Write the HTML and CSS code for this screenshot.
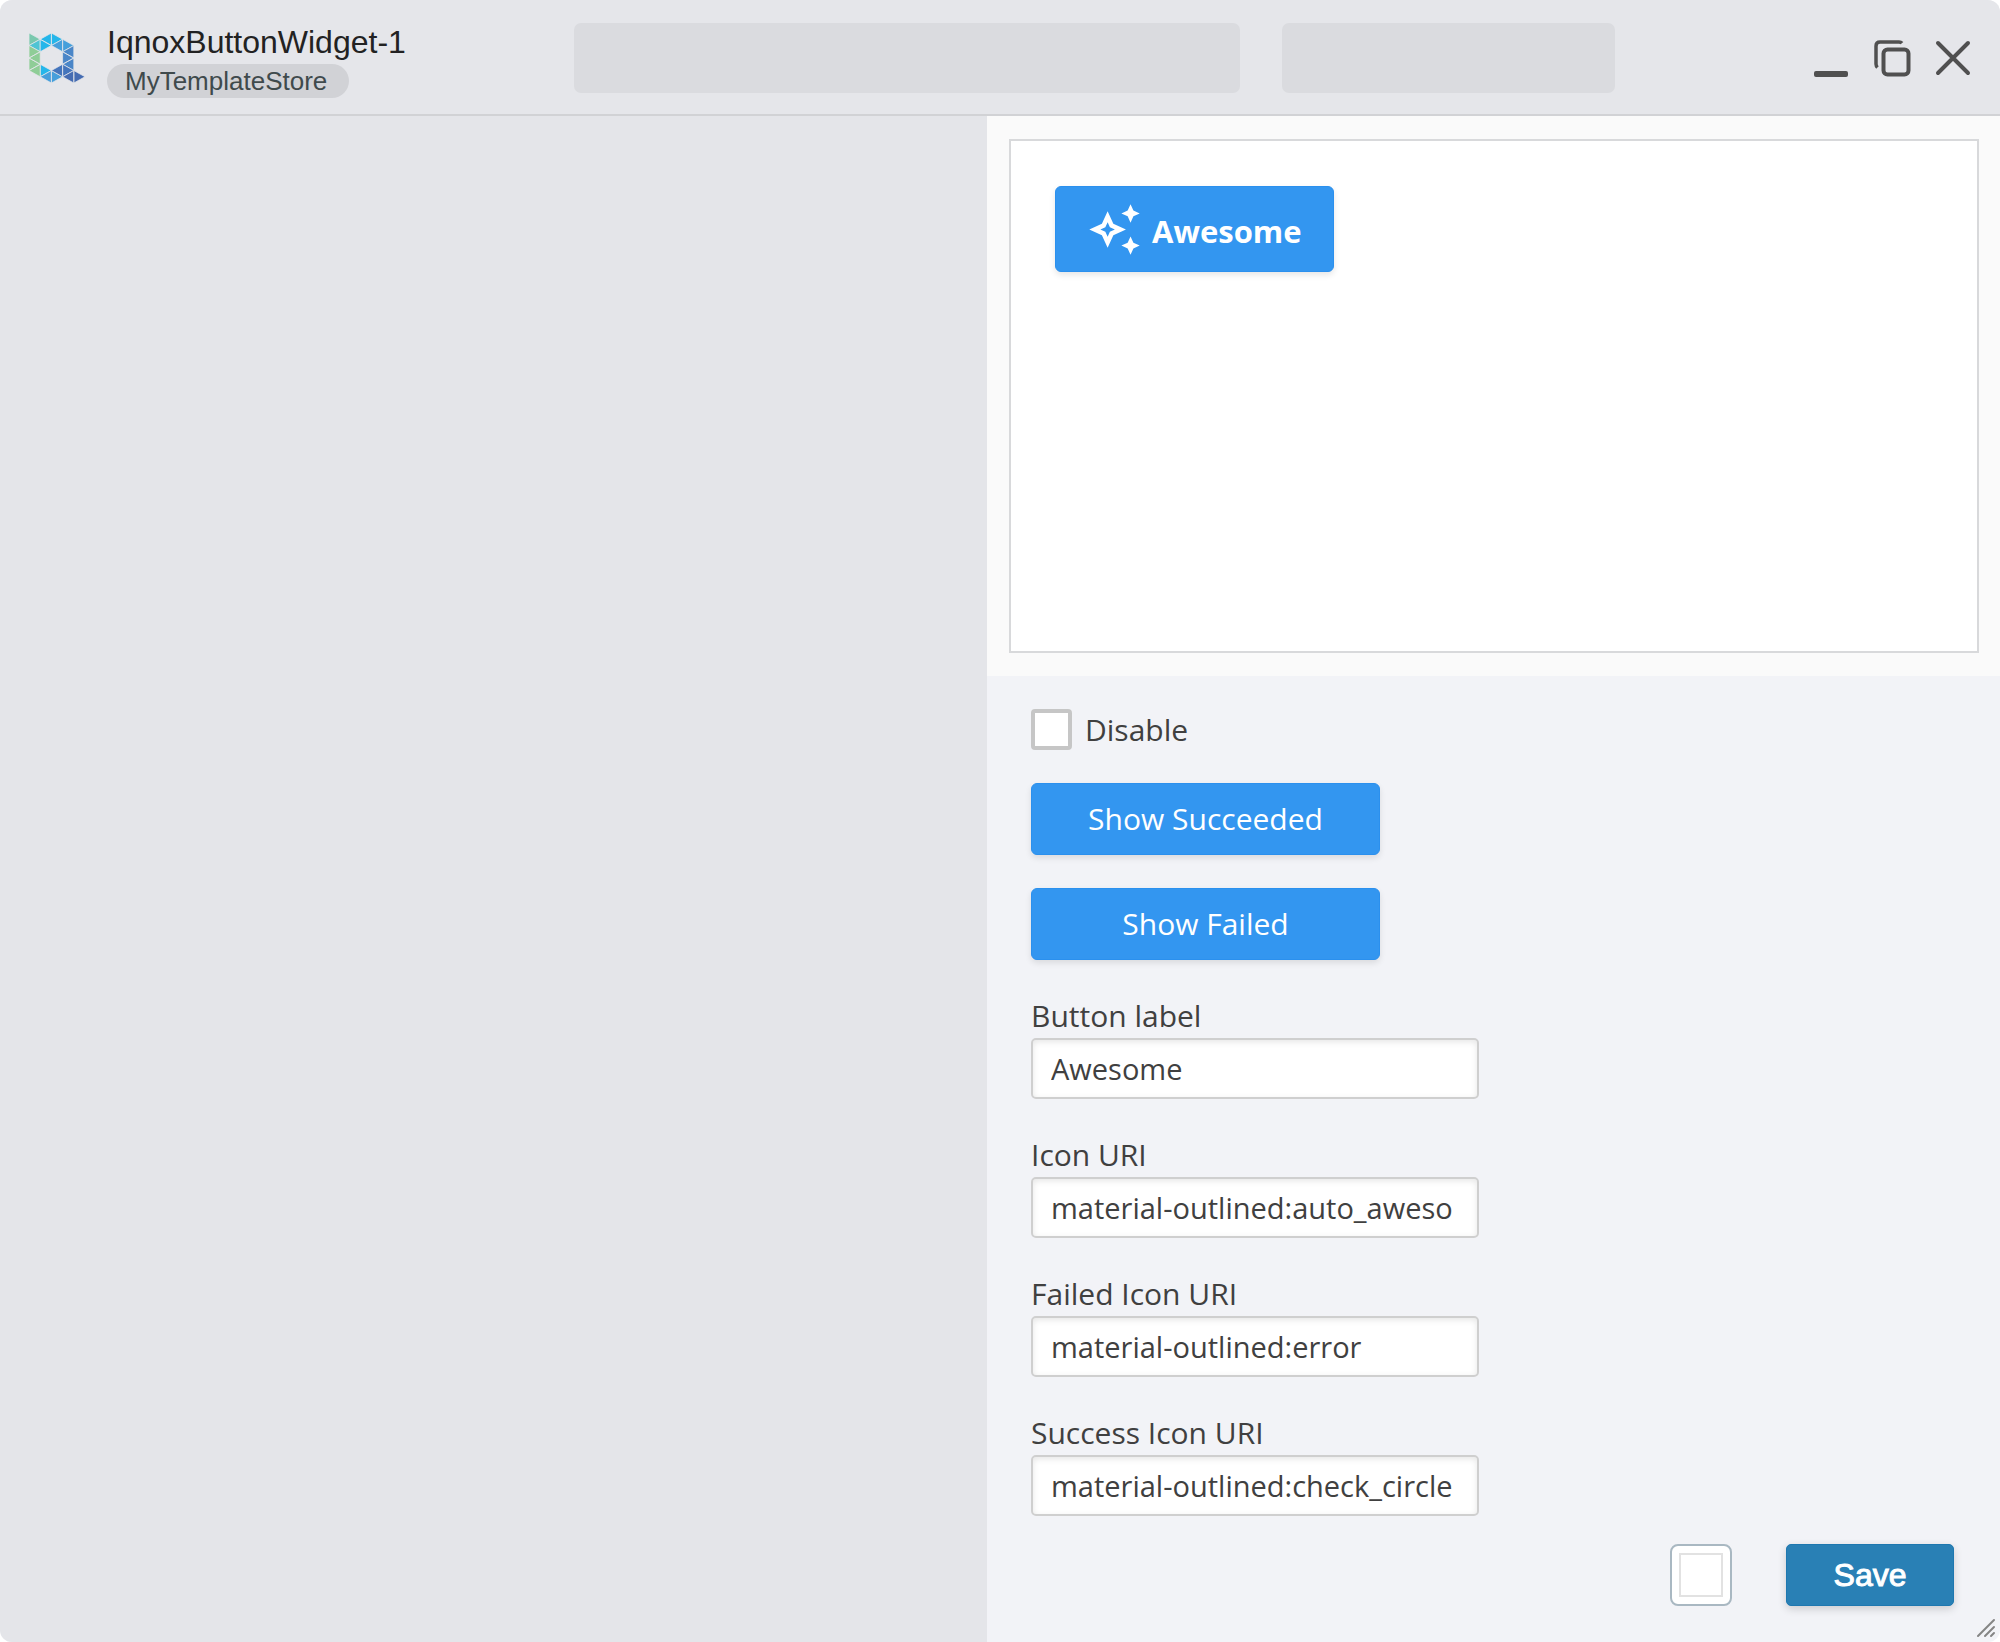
FILE: index.html
```html
<!DOCTYPE html>
<html lang="en">
<head>
<meta charset="utf-8">
<title>IqnoxButtonWidget-1</title>
<link rel="stylesheet" href="styles.css">
</head>
<body>
<div class="window">
  <header class="titlebar">
    <div class="brand">
      <svg class="logo" viewBox="0 0 50 48" preserveAspectRatio="none" aria-hidden="true">
        <path fill="#7ac8ae" d="M0 0L10 6L0 12z"/>
        <path fill="#50c4d3" d="M10 6L0 12L10 18z"/>
        <path fill="#25b6ea" d="M10 6L20 12L10 18zM20 0L10 6L20 12zM20 0L30 6L20 12zM10 30L20 36L10 42z"/>
        <path fill="#469fdb" d="M30 6L20 12L30 18zM30 6L40 12L30 18zM20 36L10 42L20 48zM20 36L30 42L20 48z"/>
        <path fill="#4a86c8" d="M40 12L30 18L40 24zM30 18L40 24L30 30zM40 24L30 30L40 36z"/>
        <path fill="#4475bc" d="M30 30L40 36L30 42zM30 30L20 36L30 42z"/>
        <path fill="#456cb2" d="M40 36L30 42L40 48zM40 36L50 42L40 48z"/>
        <path fill="#8fcd97" d="M0 12L10 18L0 24zM10 18L0 24L10 30zM0 24L10 30L0 36zM10 30L0 36L10 42z"/>
      </svg>
      <div class="names">
        <h1 class="title">IqnoxButtonWidget-1</h1>
        <span class="store">MyTemplateStore</span>
      </div>
    </div>
    <div class="slot"></div>
    <div class="slot slot-small"></div>
    <div class="controls">
      <button class="control" type="button" aria-label="Minimize">
        <svg viewBox="0 0 36 36"><rect x="1" y="31" width="34" height="6" rx="2" fill="#505050"/></svg>
      </button>
      <button class="control" type="button" aria-label="Restore">
        <svg viewBox="0 0 36 36" fill="none" stroke="#505050" stroke-width="4"><rect x="9.5" y="9.5" width="25" height="25" rx="4"/><path d="M28 3.2Q27 2 25 2H6Q2 2 2 6V24Q2 26 3.500 27.500" stroke-width="3.500"/></svg>
      </button>
      <button class="control" type="button" aria-label="Close">
        <svg viewBox="0 0 36 36" fill="none" stroke="#505050" stroke-width="4" stroke-linecap="round"><path d="M3 3L33 33M33 3L3 33"/></svg>
      </button>
    </div>
  </header>
  <main class="panes">
    <section class="canvas"></section>
    <section class="side">
      <div class="preview">
        <div class="stage">
          <button class="btn btn-icon" type="button">
            <svg class="sparkle" viewBox="0 0 24 24" fill="#fff" aria-hidden="true"><path d="M19 9l1.250-2.750L23 5l-2.750-1.250L19 1l-1.250 2.750L15 5l2.750 1.250L19 9zM19 15l-1.250 2.750L15 19l2.750 1.250L19 23l1.250-2.750L23 19l-2.750-1.250L19 15zM11.500 9.500L9 4 6.500 9.500 1 12l5.500 2.500L9 20l2.500-5.500L17 12l-5.500-2.500zM9.990 12.990L9 15.170l-.990-2.180L5.830 12l2.180-.990L9 8.830l.990 2.180 2.180.990-2.180.990z"/></svg>
            <span class="btn-text">Awesome</span>
          </button>
        </div>
      </div>
      <form class="settings">
        <div class="actions">
          <label class="check"><input type="checkbox">Disable</label>
          <button class="btn btn-wide" type="button">Show Succeeded</button>
          <button class="btn btn-wide" type="button">Show Failed</button>
        </div>
        <div class="fields">
          <div class="field">
            <label for="label">Button label</label>
            <input id="label" type="text" value="Awesome">
          </div>
          <div class="field">
            <label for="icon">Icon URI</label>
            <input id="icon" type="text" value="material-outlined:auto_aweso">
          </div>
          <div class="field">
            <label for="failed">Failed Icon URI</label>
            <input id="failed" type="text" value="material-outlined:error">
          </div>
          <div class="field">
            <label for="success">Success Icon URI</label>
            <input id="success" type="text" value="material-outlined:check_circle">
          </div>
        </div>
        <div class="footer">
          <input class="color" type="color" value="#ffffff" aria-label="Color">
          <button class="save" type="button">Save</button>
        </div>
      </form>
    </section>
  </main>
  <svg class="grip" viewBox="0 0 20 20" fill="none" stroke="#858585" stroke-width="2" stroke-linecap="round" aria-hidden="true"><path d="M2 18L18 2M9 18L18 9M15 18L18 15"/></svg>
</div>
</body>
</html>
```

FILE: styles.css
```css
* {
  box-sizing: border-box;
}

body {
  margin: 0;
  background: #fff;
  color: #404040;
  font-family: "Open Sans", "Noto Sans", sans-serif;
  font-size: 30px;
  line-height: 40px;
}

button,
input {
  margin: 0;
  font: inherit;
  color: inherit;
}

.window {
  position: relative;
  display: flex;
  flex-direction: column;
  min-height: 100vh;
  border-radius: 12px;
  overflow: hidden;
  background: #f2f3f7;
}

/* Title bar */
.titlebar {
  display: grid;
  grid-template-columns: 574fr 666fr 375fr 385fr;
  align-items: center;
  height: 116px;
  padding-top: 2px;
  border-bottom: 2px solid #d1d2d5;
  background: #e5e6ea;
  font-family: "Liberation Sans", Arial, sans-serif;
}

.brand {
  display: flex;
  align-items: center;
  gap: 22px;
  padding-left: 29px;
}

.logo {
  width: 56px;
  height: 50px;
  stroke: #e5e6ea;
  stroke-width: 0.7;
}

.names {
  display: flex;
  flex-direction: column;
  align-items: flex-start;
  gap: 4px;
  padding-top: 6px;
}

.title {
  margin: 0;
  color: #222;
  font-size: 32px;
  font-weight: 400;
  line-height: 36px;
}

.store {
  padding: 0 22px 0 18px;
  border-radius: 17px;
  background: #d1d2d6;
  color: #3f4a4c;
  font-size: 26px;
  line-height: 34px;
}

.slot {
  height: 70px;
  border-radius: 7px;
  background: #dadbdf;
}

.slot-small {
  margin-left: 42px;
}

.controls {
  display: flex;
  justify-content: flex-end;
  gap: 25px;
  padding-right: 29px;
}

.control {
  width: 36px;
  height: 36px;
  padding: 0;
  border: 0;
  background: none;
}

.control svg {
  display: block;
  overflow: visible;
}

/* Panes */
.panes {
  display: grid;
  grid-template-columns: 987fr 1013fr;
  flex: 1;
}

.canvas {
  background: #e4e5e9;
}

.side {
  display: flex;
  flex-direction: column;
}

.preview {
  padding: 23px 21px 23px 22px;
  background: #fafafa;
}

.stage {
  min-height: 514px;
  padding: 45px 44px;
  border: 2px solid #d8d9db;
  background: #fff;
}

.btn {
  display: flex;
  align-items: center;
  justify-content: center;
  border: 1px solid #2b90ee;
  border-radius: 6px;
  background: #3396f0;
  box-shadow: 0 3px 6px rgba(0, 0, 0, 0.1);
  color: #fff;
}

.btn-icon {
  gap: 10px;
  height: 86px;
  padding: 0 31px;
  font-size: 31px;
  font-weight: 700;
}

.btn-text {
  padding-top: 4px;
}

.sparkle {
  width: 55px;
  height: 55px;
}

.btn-wide {
  width: 349px;
  height: 72px;
  font-weight: 500;
}

/* Settings */
.settings {
  display: flex;
  flex: 1;
  flex-direction: column;
  align-items: flex-start;
  gap: 26px;
  padding: 33px 46px 36px 44px;
}

.actions {
  display: flex;
  flex-direction: column;
  gap: 33px;
}

.check {
  display: flex;
  align-items: center;
  gap: 13px;
}

.check input {
  appearance: none;
  width: 41px;
  height: 41px;
  border: 4px solid #c6c6c6;
  border-radius: 4px;
  background: #fff;
}

.fields {
  display: flex;
  flex-direction: column;
  gap: 36px;
  padding-top: 10px;
}

.field {
  display: flex;
  flex-direction: column;
  gap: 2px;
}

.field input {
  width: 448px;
  height: 61px;
  padding: 0 12px 0 18px;
  border: 2px solid #cfcfcf;
  border-radius: 5px;
  background: #fff;
  box-shadow: inset 0 2px 6px rgba(0, 0, 0, 0.1);
  font-size: 29px;
}

.footer {
  display: flex;
  align-items: center;
  align-self: flex-end;
  gap: 54px;
  margin-top: auto;
}

.color {
  appearance: none;
  width: 62px;
  height: 62px;
  padding: 7px;
  border: 2px solid #a9b8c2;
  border-radius: 8px;
  background: #fff;
}

.color::-webkit-color-swatch-wrapper {
  padding: 0;
}

.color::-webkit-color-swatch {
  border: 2px solid #e2e2e2;
}

.save {
  width: 168px;
  height: 62px;
  padding: 0;
  border: 1px solid #1e78b0;
  border-radius: 5px;
  background: #2980b5;
  box-shadow: 0 3px 8px rgba(0, 0, 0, 0.16);
  color: #fff;
  font-family: "Liberation Sans", Arial, sans-serif;
  font-size: 32px;
  -webkit-text-stroke: 1px #fff;
}

.grip {
  position: absolute;
  right: 4px;
  bottom: 4px;
  width: 20px;
  height: 20px;
}
```
